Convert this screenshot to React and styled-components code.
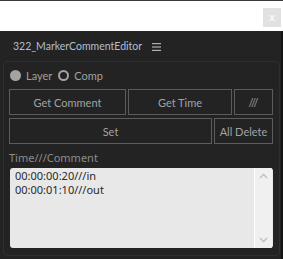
import React from "react";
import styled, { createGlobalStyle } from "styled-components";

const Global = createGlobalStyle`
  html, body { margin: 0; padding: 0; background: #ffffff; }
  body { width: 283px; height: 259px; overflow: hidden; font-family: Lato, "Noto Sans", sans-serif; }
  * { box-sizing: border-box; }
`;

const Page = styled.div`
  width: 283px;
  height: 259px;
  display: flex;
  flex-direction: column;
  border-top: 1px solid #3a3a3a;
`;

const TopBar = styled.div`
  flex: 0 0 30px;
  background: #ffffff;
  display: flex;
  justify-content: flex-end;
  align-items: flex-start;
  padding: 7px 2px 0 0;
`;

const CloseBtn = styled.div`
  width: 18px;
  height: 19px;
  background: #e1e1e1;
  color: #ffffff;
  font-size: 11px;
  font-family: "DejaVu Sans", sans-serif;
  display: flex;
  align-items: center;
  justify-content: center;
`;

const Panel = styled.div`
  flex: 1;
  min-height: 0;
  background: #232323;
  border-right: 2px solid #141414;
  display: flex;
  flex-direction: column;
  padding: 0 1px 3px 3px;
`;

const TitleRow = styled.div`
  flex: 0 0 30px;
  display: flex;
  align-items: center;
  gap: 10px;
  padding-left: 10px;
  color: #b0bfce;
  font-size: 10.5px;
`;

const Menu = styled.svg`
  width: 9px;
  height: 8px;
  margin-top: 1px;
`;

const Group = styled.div`
  flex: 1;
  min-height: 0;
  border: 1px solid #2f2f2f;
  border-radius: 4px;
  display: flex;
  flex-direction: column;
  padding: 6px 6px 0 5px;
  & > * { flex-shrink: 0; }
`;

const RadioRow = styled.div`
  display: flex;
  align-items: center;
  height: 15px;
  color: #a0a0a0;
  font-size: 11px;
  margin-bottom: 6px;
`;

const RadioItem = styled.label`
  display: flex;
  align-items: center;
  gap: 5px;
  margin-right: 6px;
  margin-left: ${p => (p.$first ? "1px" : "0")};
`;

const Dot = styled.span`
  width: 11px;
  height: 11px;
  border-radius: 50%;
  background: ${p => (p.$on ? "#a3a3a3" : "transparent")};
  border: ${p => (p.$on ? "none" : "2px solid #a3a3a3")};
`;

const ButtonGrid = styled.div`
  display: grid;
  grid-template-columns: ${p => p.$cols};
  gap: 2px;
  margin-bottom: 3px;
`;

const Button = styled.div`
  height: 26px;
  border: 1px solid #5c5c5c;
  background: #232323;
  color: #a2a2a2;
  font-size: 11px;
  display: flex;
  align-items: center;
  justify-content: center;
`;

const FieldLabel = styled.div`
  margin-top: 2px;
  color: #8c8c8c;
  font-family: "Noto Sans", sans-serif;
  font-size: 11px;
  height: 17px;
  line-height: 17px;
  margin-bottom: 2px;
`;

const TextBox = styled.div`
  margin: 0 0 0 1px;
  height: 80px;
  background: #e8e8e8;
  border-radius: 3px;
  display: flex;
  overflow: hidden;
`;

const Lines = styled.div`
  flex: 1;
  padding: 1px 5px 0;
  color: #2a2a2a;
  font-family: "Noto Sans", sans-serif;
  font-size: 11px;
  line-height: 14px;
`;

const Scroll = styled.div`
  width: 18px;
  background: #f0f0f0;
  border-left: 1px solid #ffffff;
  margin-right: 1px;
  display: flex;
  flex-direction: column;
  justify-content: space-between;
  align-items: center;
  padding: 5px 0 5px;
`;

const Chev = ({ up }) => (
  <svg width="9" height="6" viewBox="0 0 9 6">
    <path d={up ? "M1 5 L4.5 1.5 L8 5" : "M1 1 L4.5 4.5 L8 1"} fill="none" stroke="#c4c4c4" strokeWidth="1.6" />
  </svg>
);

export default function App() {
  return (
    <>
      <Global />
      <Page>
        <TopBar>
          <CloseBtn>x</CloseBtn>
        </TopBar>
        <Panel>
          <TitleRow>
            <span>322_MarkerCommentEditor</span>
            <Menu viewBox="0 0 9 8">
              <rect x="0" y="0" width="9" height="1.2" fill="#b0b0b0" />
              <rect x="0" y="3.4" width="9" height="1.2" fill="#b0b0b0" />
              <rect x="0" y="6.8" width="9" height="1.2" fill="#b0b0b0" />
            </Menu>
          </TitleRow>
          <Group>
            <RadioRow>
              <RadioItem $first>
                <Dot $on />
                Layer
              </RadioItem>
              <RadioItem>
                <Dot />
                Comp
              </RadioItem>
            </RadioRow>
            <ButtonGrid $cols="117px 104px 39px">
              <Button>Get Comment</Button>
              <Button>Get Time</Button>
              <Button>///</Button>
            </ButtonGrid>
            <ButtonGrid $cols="203px 59px">
              <Button>Set</Button>
              <Button>All Delete</Button>
            </ButtonGrid>
            <FieldLabel>Time///Comment</FieldLabel>
            <TextBox>
              <Lines>
                <div>00:00:00:20///in</div>
                <div>00:00:01:10///out</div>
              </Lines>
              <Scroll>
                <Chev up />
                <Chev />
              </Scroll>
            </TextBox>
          </Group>
        </Panel>
      </Page>
    </>
  );
}
